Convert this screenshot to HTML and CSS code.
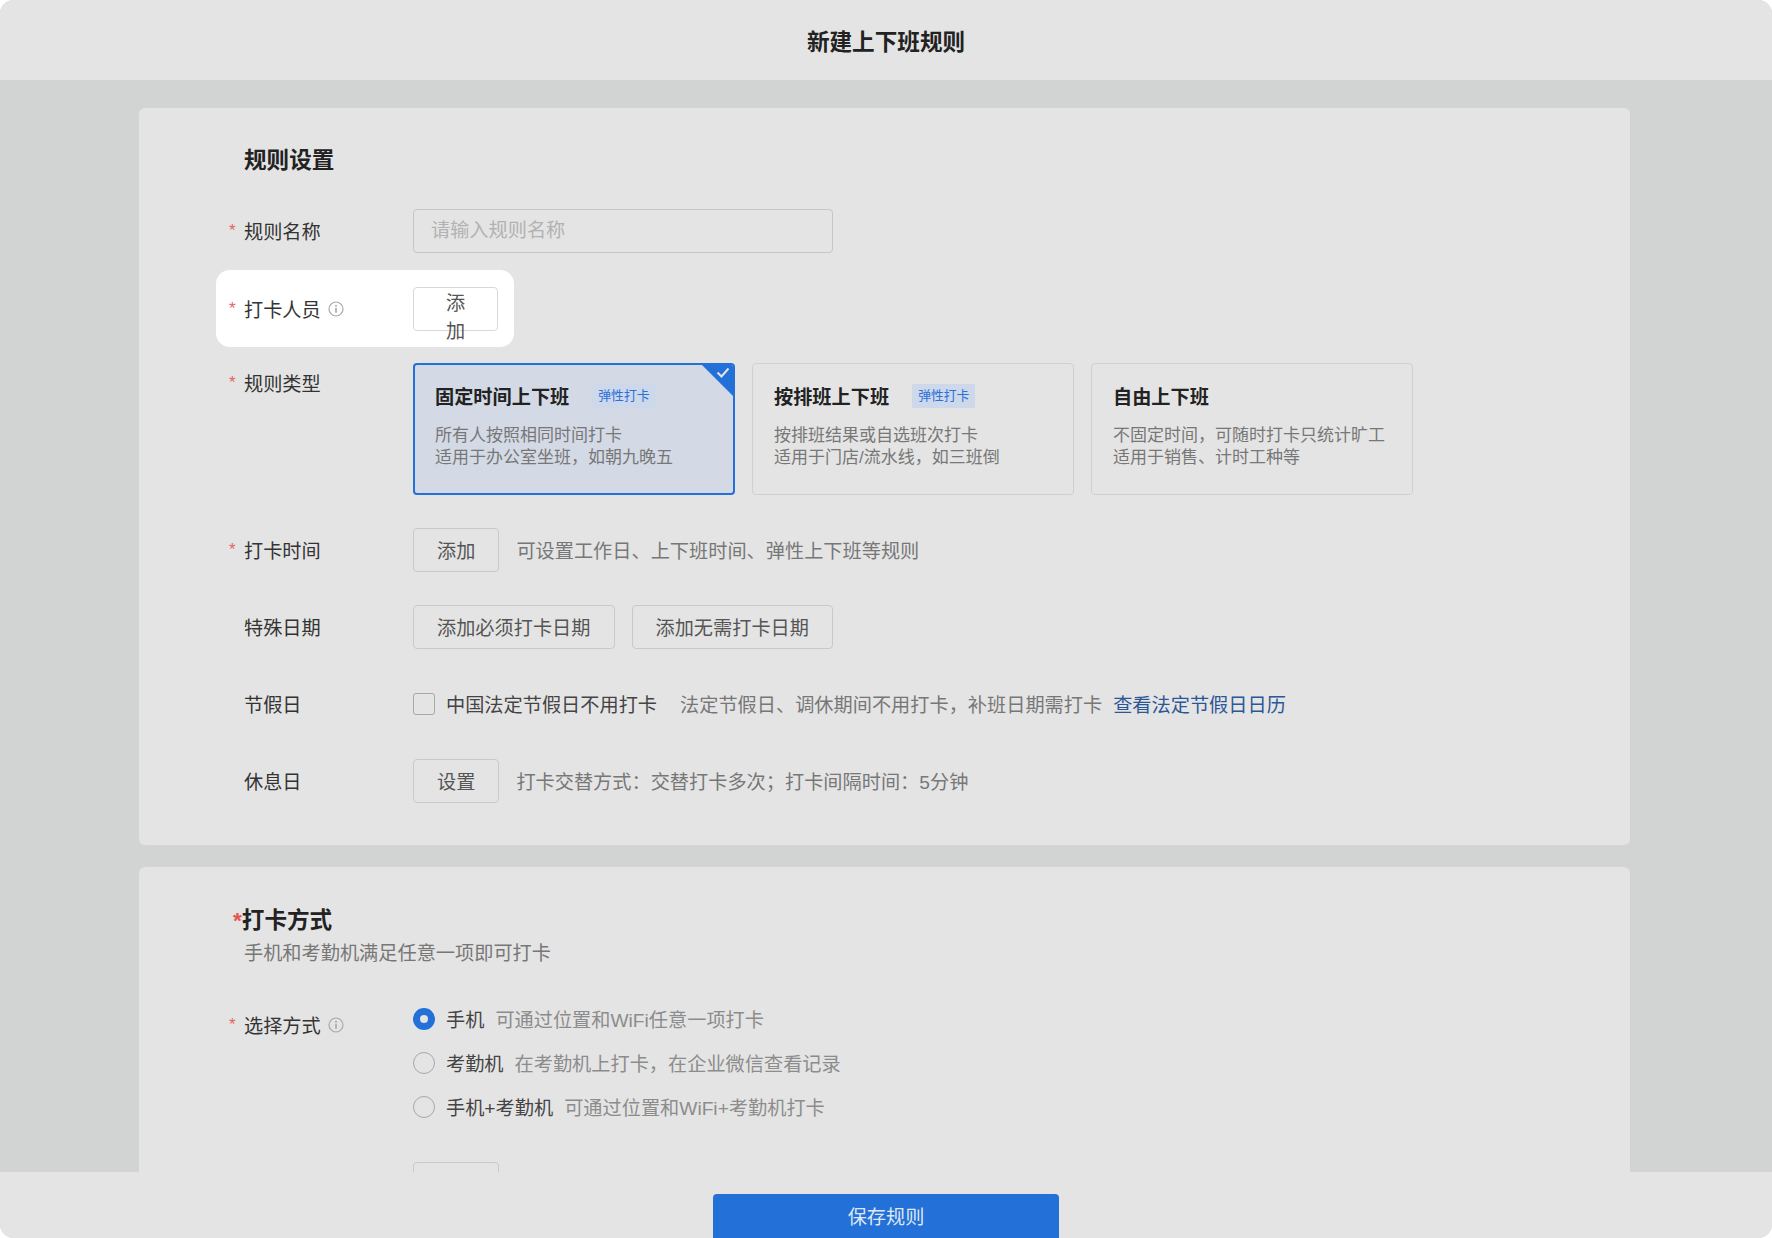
FILE: index.html
```html
<!DOCTYPE html>
<html lang="zh-CN">
<head>
    <meta charset="UTF-8">
    <meta name="viewport" content="width=device-width, initial-scale=1.0">
    <title>新建上下班规则</title>
    <link rel="stylesheet" href="styles.css">
</head>
<body>
    <div class="app">
        <header class="page-header">新建上下班规则</header>

        <main class="page-main">
            <!-- 规则设置 -->
            <section class="panel panel-rules">
                <h2 class="panel-title">规则设置</h2>

                <div class="row">
                    <div class="row-label"><span class="star">*</span>规则名称</div>
                    <input class="text-input" type="text" placeholder="请输入规则名称">
                </div>

                <div class="row row-spot">
                    <div class="row-label">
                        <span class="star">*</span>打卡人员
                        <svg class="info-icon" viewBox="0 0 16 16"><circle cx="8" cy="8" r="7" fill="none" stroke="#a9a9a9" stroke-width="1.2"/><circle cx="8" cy="4.8" r="1" fill="#a9a9a9"/><rect x="7.2" y="6.8" width="1.6" height="5" fill="#a9a9a9"/></svg>
                    </div>
                    <button class="btn btn-white">添加</button>
                </div>

                <div class="row row-top">
                    <div class="row-label"><span class="star">*</span>规则类型</div>
                    <div class="type-list">
                        <div class="type-card active">
                            <svg class="corner" viewBox="0 0 35 35"><path d="M0 0H35V35Z" fill="#2270d8"/><path d="M17.5 9.5l4 4 7-8" fill="none" stroke="#e4e4e4" stroke-width="2"/></svg>
                            <div class="type-head">固定时间上下班<span class="tag">弹性打卡</span></div>
                            <p class="type-desc">所有人按照相同时间打卡<br>适用于办公室坐班，如朝九晚五</p>
                        </div>
                        <div class="type-card">
                            <div class="type-head">按排班上下班<span class="tag">弹性打卡</span></div>
                            <p class="type-desc">按排班结果或自选班次打卡<br>适用于门店/流水线，如三班倒</p>
                        </div>
                        <div class="type-card">
                            <div class="type-head">自由上下班</div>
                            <p class="type-desc">不固定时间，可随时打卡只统计旷工<br>适用于销售、计时工种等</p>
                        </div>
                    </div>
                </div>

                <div class="row">
                    <div class="row-label"><span class="star">*</span>打卡时间</div>
                    <button class="btn">添加</button>
                    <span class="hint">可设置工作日、上下班时间、弹性上下班等规则</span>
                </div>

                <div class="row">
                    <div class="row-label">特殊日期</div>
                    <button class="btn">添加必须打卡日期</button>
                    <button class="btn">添加无需打卡日期</button>
                </div>

                <div class="row">
                    <div class="row-label">节假日</div>
                    <span class="checkbox"></span>
                    <span class="check-text">中国法定节假日不用打卡</span>
                    <span class="hint hint-holiday">法定节假日、调休期间不用打卡，补班日期需打卡</span>
                    <a class="link" href="#">查看法定节假日日历</a>
                </div>

                <div class="row">
                    <div class="row-label">休息日</div>
                    <button class="btn">设置</button>
                    <span class="hint">打卡交替方式：交替打卡多次；打卡间隔时间：5分钟</span>
                </div>
            </section>

            <!-- 打卡方式 -->
            <section class="panel panel-method">
                <h2 class="panel-title"><span class="title-star">*</span>打卡方式</h2>
                <p class="panel-sub">手机和考勤机满足任意一项即可打卡</p>

                <div class="row row-top">
                    <div class="row-label">
                        <span class="star">*</span>选择方式
                        <svg class="info-icon" viewBox="0 0 16 16"><circle cx="8" cy="8" r="7" fill="none" stroke="#a9a9a9" stroke-width="1.2"/><circle cx="8" cy="4.8" r="1" fill="#a9a9a9"/><rect x="7.2" y="6.8" width="1.6" height="5" fill="#a9a9a9"/></svg>
                    </div>
                    <div class="radio-list">
                        <div class="radio-item">
                            <span class="radio checked"></span>
                            <span class="check-text">手机</span>
                            <span class="hint-light">可通过位置和WiFi任意一项打卡</span>
                        </div>
                        <div class="radio-item">
                            <span class="radio"></span>
                            <span class="check-text">考勤机</span>
                            <span class="hint-light">在考勤机上打卡，在企业微信查看记录</span>
                        </div>
                        <div class="radio-item">
                            <span class="radio"></span>
                            <span class="check-text">手机+考勤机</span>
                            <span class="hint-light">可通过位置和WiFi+考勤机打卡</span>
                        </div>
                    </div>
                </div>

                <div class="row row-next">
                    <div class="row-label"></div>
                    <button class="btn">添加</button>
                </div>
            </section>
        </main>

        <footer class="page-footer">
            <button class="btn-save">保存规则</button>
        </footer>
    </div>
</body>
</html>
```

FILE: styles.css
```css
* {
    box-sizing: border-box;
}
html, body {
    height: 100%;
    margin: 0;
    background-color: #fff;
}
body {
    font-family: "Liberation Sans", "Noto Sans CJK SC", sans-serif;
    font-size: 19.2px;
    color: #333;
    overflow: hidden;
}
.app {
    height: 1238px;
    display: flex;
    flex-direction: column;
    border-radius: 14px;
    overflow: hidden;
    background-color: #d2d4d3;
}
.page-header {
    height: 80px;
    flex: none;
    display: flex;
    align-items: center;
    justify-content: center;
    background-color: #e4e4e4;
    font-size: 22.6px;
    font-weight: 700;
    color: #222;
}
.page-main {
    flex: 1;
    min-height: 0;
    overflow: hidden;
    padding: 28px 142px 0 139px;
}
.page-footer {
    height: 66px;
    flex: none;
    display: flex;
    justify-content: center;
    align-items: flex-end;
    background-color: #e4e4e4;
}
.btn-save {
    width: 346px;
    height: 44px;
    border: none;
    border-radius: 4px 4px 0 0;
    background-color: #2270d8;
    color: #dfe7f2;
    font: inherit;
}

.panel {
    background-color: #e4e4e4;
    border-radius: 6px;
    padding: 0 105px;
}
.panel-rules {
    height: 737px;
    padding-top: 37px;
    margin-bottom: 22px;
}
.panel-method {
    padding-top: 38px;
    height: 400px;
}
.panel-title {
    margin: 0 0 32px;
    height: 32px;
    line-height: 32px;
    font-size: 22.6px;
    font-weight: 700;
    color: #222;
}
.panel-method .panel-title {
    margin-bottom: 0;
}
.title-star {
    color: #e5544e;
    margin-left: -11px;
}
.panel-sub {
    margin: 3px 0 37px;
    line-height: 28px;
    color: #777;
}

.row {
    display: flex;
    align-items: center;
    min-height: 44px;
    margin-bottom: 33px;
}
.row-top {
    align-items: flex-start;
}
.row-label {
    width: 169px;
    flex: none;
    display: flex;
    align-items: center;
    height: 44px;
}
.row-top .row-label {
    height: 40px;
}
.star {
    width: 15px;
    margin-left: -15px;
    color: #e5645f;
    font-size: 17px;
}
.info-icon {
    width: 16px;
    height: 16px;
    margin-left: 7px;
}
.row-spot {
    width: 298px;
    height: 77px;
    margin: -16px 0 16px -28px;
    padding: 0 16px 0 28px;
    background-color: #fff;
    border-radius: 14px;
}

.text-input {
    width: 420px;
    height: 44px;
    padding: 0 17px;
    border: 1px solid #c6c6c6;
    border-radius: 4px;
    background: transparent;
    font: inherit;
}
.text-input::placeholder {
    color: #b2b2b2;
}
.btn {
    height: 44px;
    padding: 0 23px;
    border: 1px solid #c9c9c9;
    border-radius: 4px;
    background-color: #e4e4e4;
    color: #555;
    font: inherit;
}
.btn + .btn {
    margin-left: 17px;
}
.btn-white {
    background-color: #fff;
    border-color: #d8d8d8;
}
.hint {
    margin-left: 17px;
    color: #777;
}
.hint-holiday {
    margin-left: 23px;
}
.link {
    margin-left: 11px;
    color: #2c5796;
    text-decoration: none;
}
.check-text {
    margin-left: 11px;
    color: #444;
}

.checkbox {
    width: 22px;
    height: 22px;
    border: 1.5px solid #a8a8a8;
    border-radius: 3px;
}

.type-list {
    display: flex;
    gap: 17px;
}
.type-card {
    position: relative;
    width: 322px;
    height: 132px;
    padding: 20px 21px 0;
    border: 1px solid #d0d0d0;
    border-radius: 4px;
    overflow: hidden;
}
.type-card.active {
    border: 2px solid #2270d8;
    padding: 19px 20px 0;
    background-color: #d3dae5;
}
.corner {
    position: absolute;
    top: -2px;
    right: -2px;
    width: 35px;
    height: 35px;
}
.type-head {
    display: flex;
    align-items: center;
    height: 24px;
    font-weight: 700;
    color: #222;
}
.tag {
    margin-left: 23px;
    padding: 0 6px;
    height: 24px;
    line-height: 24px;
    background-color: #cdd8ea;
    color: #2a70d8;
    font-size: 12.8px;
    font-weight: 400;
}
.type-desc {
    margin: 17px 0 0;
    font-size: 17px;
    line-height: 22px;
    color: #777;
}

.radio-list {
    display: flex;
    flex-direction: column;
    gap: 16px;
}
.radio-item {
    display: flex;
    align-items: center;
    height: 28px;
}
.radio {
    width: 22px;
    height: 22px;
    border: 1.5px solid #a8a8a8;
    border-radius: 50%;
}
.radio.checked {
    border: 7px solid #2270d8;
    background-color: #e4e4e4;
}
.hint-light {
    margin-left: 11px;
    color: #8c8c8c;
}
.row-next {
    margin-top: 41px;
}
```
